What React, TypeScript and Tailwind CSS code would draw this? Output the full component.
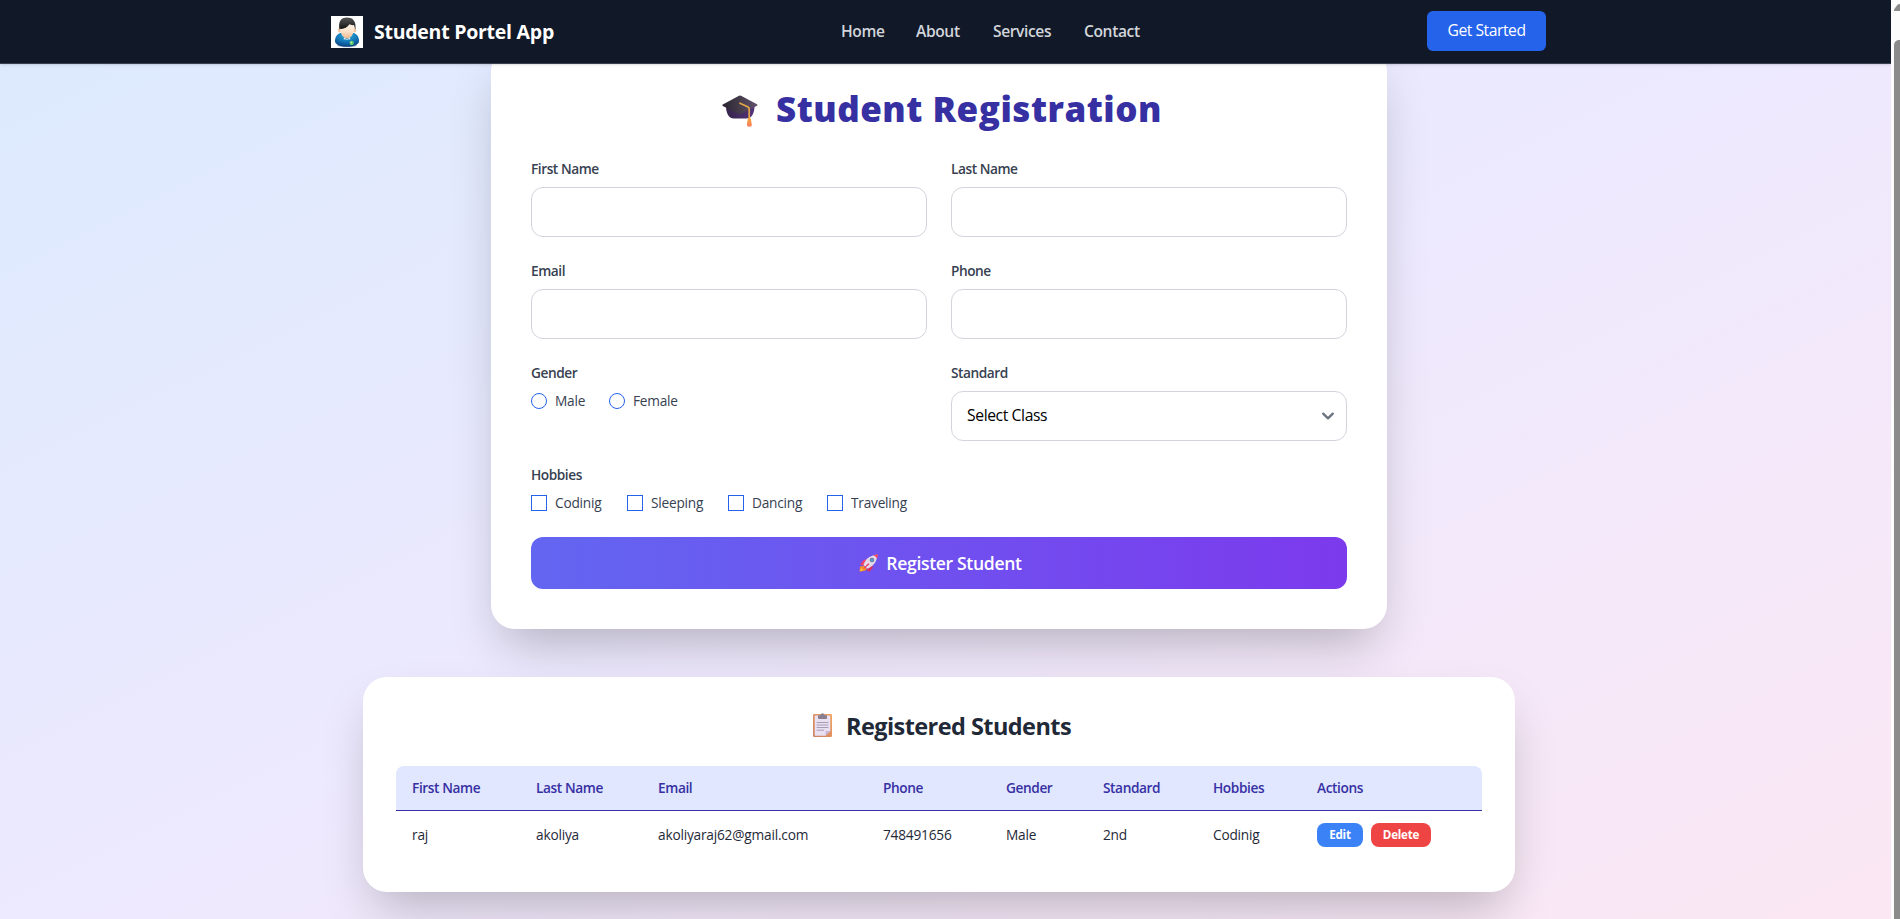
import React from "react";

const navLinks = [
  { label: "Home", width: "w-[43px]" },
  { label: "About", width: "w-[45px]" },
  { label: "Services", width: "w-[59px]" },
  { label: "Contact", width: "w-[57px]" },
];

const hobbies = [
  { label: "Codinig", width: "w-[72px]" },
  { label: "Sleeping", width: "w-[77px]" },
  { label: "Dancing", width: "w-[75px]" },
  { label: "Traveling", width: "w-[79px]" },
];

const columns = [
  { label: "First Name", value: "raj", width: "w-[124px]" },
  { label: "Last Name", value: "akoliya", width: "w-[122px]" },
  { label: "Email", value: "akoliyaraj62@gmail.com", width: "w-[225px]" },
  { label: "Phone", value: "748491656", width: "w-[123px]" },
  { label: "Gender", value: "Male", width: "w-[97px]" },
  { label: "Standard", value: "2nd", width: "w-[110px]" },
  { label: "Hobbies", value: "Codinig", width: "w-[104px]" },
];

function Avatar() {
  return (
    <svg viewBox="0 0 32 32" className="h-8 w-8 shrink-0">
      <defs>
        <radialGradient id="body" cx="0.5" cy="0.2" r="0.8">
          <stop offset="0" stopColor="#2bb0dc" />
          <stop offset="0.6" stopColor="#1272b4" />
          <stop offset="1" stopColor="#0a3f80" />
        </radialGradient>
        <linearGradient id="face" x1="0" y1="0" x2="0" y2="1">
          <stop offset="0" stopColor="#fffaf5" />
          <stop offset="0.6" stopColor="#fde3cb" />
          <stop offset="1" stopColor="#f3b98e" />
        </linearGradient>
        <linearGradient id="hair" x1="0" y1="0" x2="0" y2="1">
          <stop offset="0" stopColor="#555" />
          <stop offset="0.5" stopColor="#333" />
          <stop offset="1" stopColor="#0c0c0c" />
        </linearGradient>
      </defs>
      <rect width="32" height="32" fill="#fff" />
      <ellipse cx="16" cy="29.5" rx="10" ry="1.8" fill="#b9c2cc" />
      <path d="M4 25c0-5 3-8 8-8.500h8c5 .5 8 3.500 8 8.500 0 4-6 5.800-12 5.800S4 29 4 25z" fill="url(#body)" />
      <path d="M13 21.500l3 2 3-2 .3 2-1.600-.3-1.700.8-1.700-.8-1.600.3z" fill="#eef6fb" />
      <ellipse cx="8.600" cy="14.200" rx="1.500" ry="2.200" fill="#f3c49d" />
      <ellipse cx="23.600" cy="14.200" rx="1.500" ry="2.200" fill="#f3c49d" />
      <path d="M8.900 10c0-4 3-6 7.200-6s7.200 2 7.200 6c0 7-2.900 12.600-7.200 12.600S8.900 17 8.900 10z" fill="url(#face)" />
      <path d="M8.500 13.800C7 6 9.500 1.500 16 1.500c6.500 0 9.500 4.500 8.300 12.300l-1.300-4.700c-2.500.2-3.500-.3-4.500-.8-2.500 3.500-6 5-9.500 4.500z" fill="url(#hair)" />
      <circle cx="20.700" cy="27" r="2.200" fill="#5bc46c" />
      <circle cx="20.300" cy="26.500" r="0.900" fill="#b5f0ae" />
    </svg>
  );
}

function GraduationCap() {
  return (
    <svg viewBox="0 0 36 32" className="h-8 w-9 shrink-0">
      <defs>
        <linearGradient id="board" x1="0" y1="0" x2="1" y2="0">
          <stop offset="0" stopColor="#2a2430" />
          <stop offset="0.5" stopColor="#453c4b" />
          <stop offset="1" stopColor="#62516f" />
        </linearGradient>
        <linearGradient id="base" x1="0" y1="0" x2="1" y2="0">
          <stop offset="0" stopColor="#35244a" />
          <stop offset="1" stopColor="#54357c" />
        </linearGradient>
        <linearGradient id="tassel" x1="0" y1="0" x2="0" y2="1">
          <stop offset="0" stopColor="#f3a83b" />
          <stop offset="1" stopColor="#fb7b60" />
        </linearGradient>
      </defs>
      <path d="M4 11h28.500c0 6-2 12.500-8.500 12.500H12C6 23.500 4 17 4 11z" fill="url(#base)" />
      <path d="M.8 9.500L17 .8q1-.5 2 0L35 9.200q1 .8 0 1.500L19 19q-1.200.6-2.400 0L.8 10.900q-.9-.8 0-1.400z" fill="url(#board)" />
      <path d="M18 8.200l7.600 3.500q1.600.8 1.600 2.600V25" fill="none" stroke="#e6a645" strokeWidth="1.700" strokeLinecap="round" />
      <path d="M26.500 23h1.600q.6 0 .7.700l1 5.800q.2 2.200-2.400 2.200t-2.500-2.200l.9-5.800q.1-.7.700-.7z" fill="url(#tassel)" />
    </svg>
  );
}

function Rocket() {
  return (
    <svg viewBox="0 0 20 18" className="h-[18px] w-5 shrink-0">
      <path d="M1 12.500l3.800-.7 3 3-1.200 1.700-6 1.300z" fill="#f98b2b" />
      <path d="M.8 17.300l1.300-3.500 2.600 2.500z" fill="#fdbb3f" />
      <path d="M2 9.200l3.200-3.500 4.500-.2-3.700 6-4.300-.5z" fill="#f3426c" />
      <path d="M10.500 17.500l3-3.300.2-4.800-6 3.900.6 3.800z" fill="#d92f62" />
      <path d="M4.500 11C6 6 9.500 1.800 18.500.5 18 8 14 12.500 8.500 14.700z" fill="#e3dbea" />
      <path d="M14.300 1.300L19 .3l-.9 4.500q-1.300-2.600-3.800-3.500z" fill="#f5405a" />
      <path d="M5 13.800l4.300-4.600 1 1-4.600 4.400z" fill="#f3335f" />
      <circle cx="13" cy="6" r="2.300" fill="#7b6f93" />
      <circle cx="13" cy="6" r="1.600" fill="#4f9fd8" />
    </svg>
  );
}

function Clipboard() {
  return (
    <svg viewBox="0 0 19 24" className="h-6 w-[19px] shrink-0">
      <defs>
        <linearGradient id="wood" x1="1" y1="0" x2="0" y2="1">
          <stop offset="0" stopColor="#f5a25c" />
          <stop offset="1" stopColor="#ca8064" />
        </linearGradient>
      </defs>
      <rect y="1" width="19" height="23" rx="1.200" fill="url(#wood)" />
      <path d="M1.700 3.200q0-.7.700-.7h14.200q.7 0 .7.700V18l-4.800 4.800H2.400q-.7 0-.7-.7z" fill="#e9e0f2" />
      <path d="M12.500 22.800V19q0-1 1-1h3.800z" fill="#c9b5d6" />
      <path d="M5 2.200h2.300Q8 .3 9.500.3t2.200 1.900H14V5q0 1-1 1H6Q5 6 5 5z" fill="#887f91" />
      <path d="M3.600 9.500h11.800M3.600 12h11.800M3.600 14.500h11.800M3.600 17.200H11" stroke="#a99db5" strokeWidth="1" />
    </svg>
  );
}

function FieldLabel({ children }: { children: React.ReactNode }) {
  return (
    <div className="h-5 text-[13.700px] font-semibold leading-5 tracking-[-0.033em] text-[#374151]">{children}</div>
  );
}

function TextField({ label }: { label: string }) {
  return (
    <label className="flex flex-col gap-2">
      <FieldLabel>{label}</FieldLabel>
      <input className="h-[50px] w-full rounded-xl border border-[#d1d5db] bg-white px-4 outline-none" />
    </label>
  );
}

function Choice({ label, width, round }: { label: string; width: string; round?: boolean }) {
  return (
    <label
      className={
        "flex h-5 items-center gap-2 whitespace-nowrap text-[13.700px] leading-5 tracking-[-0.017em] text-[#374151] " + width
      }
    >
      <input
        type={round ? "radio" : "checkbox"}
        className={
          "h-4 w-4 shrink-0 appearance-none border border-[#2563eb] bg-white " + (round ? "rounded-full" : "")
        }
      />
      {label}
    </label>
  );
}

function Navbar() {
  return (
    <nav className="relative z-10 h-16 shrink-0 border-b border-[#374151] bg-[#111827] pr-[13px] shadow-sm">
      <div className="mx-auto flex h-[63px] w-[1216px] items-center justify-between">
        <div className="flex w-[224px] items-center gap-[11px] whitespace-nowrap text-[19.500px] font-bold tracking-[-0.013em] text-white">
          <Avatar />
          <span>Student Portel App</span>
        </div>
        <div className="flex gap-8 pl-[30px] text-[15.600px] font-semibold tracking-[-0.025em] text-[#d1d5db]">
          {navLinks.map((link) => (
            <a key={link.label} className={"whitespace-nowrap " + link.width}>
              {link.label}
            </a>
          ))}
        </div>
        <div className="flex w-[150px] justify-end pb-px pr-px">
          <button className="h-10 w-[119px] whitespace-nowrap rounded-md bg-[#2563eb] text-[15.700px] font-medium tracking-[-0.030em] text-white">
            Get Started
          </button>
        </div>
      </div>
    </nav>
  );
}

function RegistrationCard() {
  return (
    <section className="w-[896px] rounded-3xl bg-white p-10 shadow-[0_25px_50px_-12px_rgba(0,0,0,0.25)]">
      <h1 className="flex h-10 items-center justify-center whitespace-nowrap pl-1 text-[35px] font-extrabold leading-10 tracking-[0.014em] text-[#3730a3]">
        <span className="mr-[18px] mt-2">
          <GraduationCap />
        </span>
        <span className="w-[384px] pt-1">Student Registration</span>
      </h1>
      <div className="mt-8 grid grid-cols-2 gap-6">
        <TextField label="First Name" />
        <TextField label="Last Name" />
        <TextField label="Email" />
        <TextField label="Phone" />
        <div className="flex flex-col gap-2">
          <FieldLabel>Gender</FieldLabel>
          <div className="flex gap-6">
            <Choice label="Male" width="w-[54px]" round />
            <Choice label="Female" width="w-[70px]" round />
          </div>
        </div>
        <div className="flex flex-col gap-2">
          <FieldLabel>Standard</FieldLabel>
          <div className="flex h-[50px] items-center justify-between rounded-xl border border-[#d1d5db] pl-[15px] pr-[6px] text-[15.700px] tracking-[-0.025em] text-black">
            <span>Select Class</span>
            <svg viewBox="0 0 20 20" className="h-6 w-6" fill="none">
              <path d="M6 8l4 4 4-4" stroke="#6b7280" strokeWidth="1.900" strokeLinecap="round" strokeLinejoin="round" />
            </svg>
          </div>
        </div>
        <div className="col-span-2 flex flex-col gap-2">
          <FieldLabel>Hobbies</FieldLabel>
          <div className="flex gap-6">
            {hobbies.map((hobby) => (
              <Choice key={hobby.label} label={hobby.label} width={hobby.width} />
            ))}
          </div>
        </div>
      </div>
      <button className="mt-6 flex h-[52px] w-full items-center justify-center gap-[7px] whitespace-nowrap rounded-xl bg-[linear-gradient(to_right,#6366f1,#7c3aed)] pl-[3px] text-[17.600px] font-semibold tracking-[-0.020em] text-white">
        <Rocket />
        <span>Register Student</span>
      </button>
    </section>
  );
}

function StudentsCard() {
  return (
    <section className="mt-12 h-[215px] w-[1152px] rounded-3xl bg-white p-8 shadow-[0_25px_50px_-12px_rgba(0,0,0,0.25)]">
      <h2 className="flex h-8 items-center justify-center gap-[14px] whitespace-nowrap pl-1.5 text-[23.500px] font-bold leading-8 tracking-[-0.024em] text-[#1f2937]">
        <Clipboard />
        <span className="pt-0.5">Registered Students</span>
      </h2>
      <div className="mx-px mt-[25px] flex h-[45px] items-center overflow-hidden rounded-t-lg border-b border-[#3730a3] bg-[#e0e7ff] text-[13.700px] font-semibold tracking-[-0.030em] text-[#3730a3]">
        {columns.map((column) => (
          <div key={column.label} className={"shrink-0 whitespace-nowrap pl-4 " + column.width}>
            {column.label}
          </div>
        ))}
        <div className="pl-4">Actions</div>
      </div>
      <div className="mx-px flex h-12 items-center text-[13.700px] tracking-[-0.015em] text-[#1f2937]">
        {columns.map((column) => (
          <div key={column.label} className={"shrink-0 whitespace-nowrap pl-4 " + column.width}>
            {column.value}
          </div>
        ))}
        <div className="flex gap-2 pl-4 text-[11.600px] font-bold text-white">
          <button className="h-6 w-[46px] rounded-lg bg-[#3b82f6]">Edit</button>
          <button className="h-6 w-[60px] rounded-lg bg-[#ef4444]">Delete</button>
        </div>
      </div>
    </section>
  );
}

function Scrollbar() {
  return (
    <div className="flex w-[9px] shrink-0 flex-col items-end bg-[#fcfcfc]">
      <svg viewBox="0 0 6 7" className="mt-1 h-[7px] w-[6px]">
        <path d="M0 7V5.500L3.500.8Q4.200 0 6 0v7z" fill="#8b8b8b" />
      </svg>
      <div className="mt-[29px] w-[6px] flex-1 rounded-tl-[5px] bg-[#8b8b8b]" />
    </div>
  );
}

export default function App() {
  return (
    <div className="flex h-[919px] w-[1900px] overflow-hidden bg-white font-['Open_Sans','Noto_Sans',sans-serif]">
      <div className="flex h-[919px] w-[1891px] flex-col overflow-hidden">
        <Navbar />
        <main className="-mt-[65px] flex h-[941px] shrink-0 flex-col items-center bg-[linear-gradient(to_bottom_right,#dbeafe,#ede9fe,#fce7f3)] pr-[13px] pt-12">
          <RegistrationCard />
          <StudentsCard />
        </main>
      </div>
      <Scrollbar />
    </div>
  );
}
